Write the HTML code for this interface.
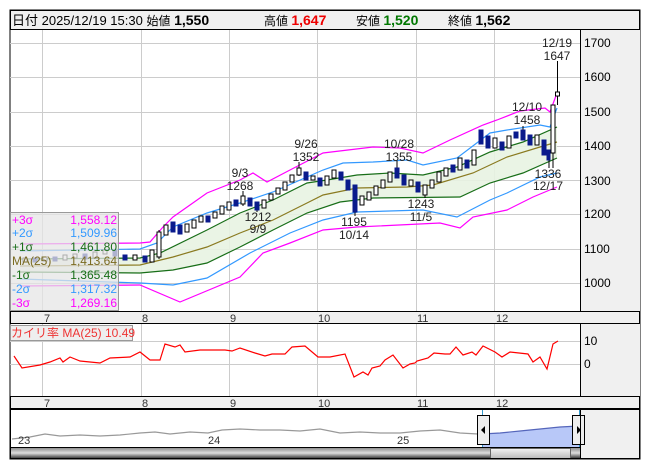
<!DOCTYPE html>
<html><head><meta charset="utf-8"><style>
body{margin:0;background:#fff;width:653px;height:470px;overflow:hidden}
svg{display:block;font-family:"Liberation Sans","Noto Sans CJK JP",sans-serif}
</style></head><body>
<svg width="653" height="470" viewBox="0 0 653 470" xmlns="http://www.w3.org/2000/svg">
<defs>
<linearGradient id="sb" x1="0" y1="0" x2="0" y2="1"><stop offset="0" stop-color="#888"/><stop offset="0.5" stop-color="#ddd"/><stop offset="1" stop-color="#333"/></linearGradient>
<linearGradient id="th" x1="0" y1="0" x2="0" y2="1"><stop offset="0" stop-color="#f4f4f4"/><stop offset="1" stop-color="#bbb"/></linearGradient>
</defs>
<rect x="10" y="10" width="630" height="449" fill="#fff" stroke="#000"/>
<rect x="10.5" y="10.5" width="629" height="19" fill="#f0f0f0" stroke="#000"/>
<text x="12" y="25" font-size="13" fill="#000">日付 2025/12/19 15:30 <tspan font-size="12">始値</tspan> <tspan font-weight="bold" font-size="14">1,550</tspan></text>
<text x="264" y="25" font-size="12">高値 <tspan font-weight="bold" font-size="14" fill="#e00">1,647</tspan></text>
<text x="356" y="25" font-size="12">安値 <tspan font-weight="bold" font-size="14" fill="#070">1,520</tspan></text>
<text x="448" y="25" font-size="12">終値 <tspan font-weight="bold" font-size="14">1,562</tspan></text>
<rect x="580" y="30" width="60" height="281" fill="#f0f0f0"/>
<rect x="580" y="324" width="60" height="72" fill="#f0f0f0"/>
<rect x="580" y="409" width="60" height="50" fill="#f0f0f0"/>
<line x1="580.5" y1="30" x2="580.5" y2="459" stroke="#000"/>
<g stroke="#ccc" stroke-width="1">
<line x1="10" y1="43.5" x2="580" y2="43.5"/><line x1="10" y1="77.5" x2="580" y2="77.5"/><line x1="10" y1="112.5" x2="580" y2="112.5"/><line x1="10" y1="146.5" x2="580" y2="146.5"/><line x1="10" y1="180.5" x2="580" y2="180.5"/><line x1="10" y1="214.5" x2="580" y2="214.5"/><line x1="10" y1="249.5" x2="580" y2="249.5"/><line x1="10" y1="283.5" x2="580" y2="283.5"/>
<line x1="42.5" y1="30" x2="42.5" y2="311"/><line x1="141.5" y1="30" x2="141.5" y2="311"/><line x1="229.5" y1="30" x2="229.5" y2="311"/><line x1="317.5" y1="30" x2="317.5" y2="311"/><line x1="416.5" y1="30" x2="416.5" y2="311"/><line x1="494.5" y1="30" x2="494.5" y2="311"/>
<line x1="42.5" y1="324" x2="42.5" y2="396"/><line x1="141.5" y1="324" x2="141.5" y2="396"/><line x1="229.5" y1="324" x2="229.5" y2="396"/><line x1="317.5" y1="324" x2="317.5" y2="396"/><line x1="416.5" y1="324" x2="416.5" y2="396"/><line x1="494.5" y1="324" x2="494.5" y2="396"/>
<line x1="10" y1="341.5" x2="580" y2="341.5"/><line x1="10" y1="364.5" x2="580" y2="364.5"/>
</g>
<g font-size="12" fill="#000">
<text x="584" y="47">1700</text><text x="584" y="81">1600</text><text x="584" y="116">1500</text><text x="584" y="150">1400</text><text x="584" y="185">1300</text><text x="584" y="218">1200</text><text x="584" y="253">1100</text><text x="584" y="287">1000</text>
<text x="584" y="345">10</text><text x="584" y="368">0</text>
</g>
<polygon fill="#e8f3e2" opacity="0.9" points="20,259 140,258 160,253 207,230 240,213 273,200 307,183 327,180 357,175 390,173 423,175 457,167 490,152 523,142 557,127 557,158 523,173 490,183 460,197 373,198 340,202 307,213 273,230 240,247 207,263 173,270 140,273 20,272"/>
<g fill="none" stroke-width="1.2">
<polyline stroke="#f0f" points="20,244 140,243 150,242 163,227 173,217 207,193 240,180 253,173 267,182 290,170 323,153 373,147 400,148 423,153 450,140 483,125 497,120 520,111 545,108 550,112 557,93"/>
<polyline stroke="#39f" points="20,251 140,249 157,243 173,227 207,213 240,203 273,192 307,177 323,170 343,163 373,162 407,160 423,165 457,158 490,133 507,130 540,125 550,127 557,108"/>
<polyline stroke="#186e18" points="20,259 140,258 160,253 207,230 240,213 273,200 307,183 327,180 357,175 390,173 423,175 457,167 490,152 523,142 557,127"/>
<polyline stroke="#8a7a20" points="20,266 140,265 173,257 207,247 240,233 273,220 307,203 323,195 357,188 407,187 433,185 473,173 507,157 540,147 557,142"/>
<polyline stroke="#186e18" points="20,272 140,273 173,270 207,263 240,247 273,230 307,213 340,202 373,198 460,197 490,183 523,173 557,158"/>
<polyline stroke="#39f" points="20,279 140,283 173,285 207,278 250,253 290,233 323,220 357,212 423,210 457,217 490,200 507,193 540,177 557,173"/>
<polyline stroke="#f0f" points="20,286 140,285 180,302 240,277 263,253 290,243 323,230 357,227 440,223 460,228 473,217 507,210 533,197 557,187"/>
</g>
<g stroke="#000" stroke-width="1">
<path d="M159 259V230M243 206V191M257 202V212M299 176V162M355 185V216M397 168V161M425 195V198M523 130V126M549 160V168M553 153V168M557.5 105V61"/>
</g>
<g stroke="#000" fill="#fff">
<rect x="23" y="258" width="4" height="4"/><rect x="43" y="257" width="4" height="4"/><rect x="63" y="255" width="4" height="5"/><rect x="73" y="254" width="4" height="4"/><rect x="93" y="252" width="4" height="6"/><rect x="103" y="250" width="4" height="4"/><rect x="133" y="255" width="4" height="5"/><rect x="150" y="250" width="4" height="12"/><rect x="157" y="232" width="4" height="25"/><rect x="164" y="225" width="4" height="10"/><rect x="185" y="224" width="4" height="8"/><rect x="192" y="220" width="4" height="8"/><rect x="199" y="216" width="4" height="6"/><rect x="213" y="212" width="4" height="6"/><rect x="220" y="206" width="4" height="8"/><rect x="227" y="202" width="4" height="8"/><rect x="241" y="196" width="4" height="8"/><rect x="262" y="200" width="4" height="8"/><rect x="269" y="194" width="4" height="6"/><rect x="276" y="188" width="4" height="6"/><rect x="283" y="182" width="4" height="8"/><rect x="290" y="175" width="4" height="7"/><rect x="297" y="168" width="4" height="7"/><rect x="311" y="176" width="4" height="4"/><rect x="325" y="176" width="4" height="9"/><rect x="332" y="170" width="4" height="8"/><rect x="360" y="196" width="4" height="9"/><rect x="367" y="192" width="4" height="8"/><rect x="374" y="186" width="4" height="9"/><rect x="381" y="180" width="4" height="8"/><rect x="388" y="172" width="4" height="10"/><rect x="409" y="180" width="4" height="6"/><rect x="423" y="185" width="4" height="10"/><rect x="430" y="180" width="4" height="8"/><rect x="437" y="172" width="4" height="10"/><rect x="444" y="168" width="4" height="8"/><rect x="458" y="158" width="4" height="12"/><rect x="472" y="150" width="4" height="15"/><rect x="493" y="138" width="4" height="10"/><rect x="507" y="136" width="4" height="12"/><rect x="535" y="135" width="4" height="10"/><rect x="551" y="105" width="4" height="48"/><rect x="555.5" y="92" width="4" height="4"/>
</g>
<g fill="#0a1a8c" stroke="#0a1a8c">
<rect x="33" y="258" width="4" height="4"/><rect x="53" y="257" width="4" height="4"/><rect x="83" y="254" width="4" height="5"/><rect x="113" y="250" width="4" height="6"/><rect x="123" y="255" width="4" height="5"/><rect x="143" y="256" width="4" height="6"/><rect x="171" y="222" width="4" height="10"/><rect x="178" y="225" width="4" height="9"/><rect x="206" y="216" width="4" height="6"/><rect x="234" y="200" width="4" height="6"/><rect x="248" y="198" width="4" height="8"/><rect x="255" y="202" width="4" height="8"/><rect x="304" y="172" width="4" height="8"/><rect x="318" y="178" width="4" height="8"/><rect x="339" y="172" width="4" height="8"/><rect x="346" y="180" width="4" height="10"/><rect x="353" y="185" width="4" height="27"/><rect x="395" y="168" width="4" height="10"/><rect x="402" y="175" width="4" height="10"/><rect x="416" y="182" width="4" height="10"/><rect x="451" y="165" width="4" height="7"/><rect x="465" y="160" width="4" height="8"/><rect x="479" y="130" width="4" height="14"/><rect x="486" y="136" width="4" height="12"/><rect x="500" y="142" width="4" height="8"/><rect x="514" y="132" width="4" height="6"/><rect x="521" y="130" width="4" height="10"/><rect x="528" y="135" width="4" height="10"/><rect x="542" y="140" width="4" height="15"/><rect x="547" y="150" width="3" height="10"/>
</g>
<g font-size="12" fill="#222" text-anchor="middle">
<text x="557" y="47">12/19</text><text x="557" y="60">1647</text>
<text x="527" y="111">12/10</text><text x="527" y="124">1458</text>
<text x="306" y="148">9/26</text><text x="306" y="161">1352</text>
<text x="399" y="148">10/28</text><text x="399" y="161">1355</text>
<text x="240" y="177">9/3</text><text x="240" y="190">1268</text>
<text x="258" y="221">1212</text><text x="258" y="233">9/9</text>
<text x="354" y="226">1195</text><text x="354" y="239">10/14</text>
<text x="421" y="208">1243</text><text x="421" y="221">11/5</text>
<text x="548" y="178">1336</text><text x="548" y="190">12/17</text>
</g>
<rect x="10.5" y="212.5" width="108" height="98" fill="#e6e6e6" fill-opacity="0.75" stroke="#999"/>
<g font-size="12">
<text x="12" y="224" fill="#f0f">+3σ</text><text x="117" y="224" fill="#f0f" text-anchor="end">1,558.12</text>
<text x="12" y="237" fill="#39f">+2σ</text><text x="117" y="237" fill="#39f" text-anchor="end">1,509.96</text>
<text x="12" y="251" fill="#186e18">+1σ</text><text x="117" y="251" fill="#186e18" text-anchor="end">1,461.80</text>
<text x="12" y="265" fill="#7a6a20">MA(25)</text><text x="117" y="265" fill="#7a6a20" text-anchor="end">1,413.64</text>
<text x="12" y="279" fill="#186e18">-1σ</text><text x="117" y="279" fill="#186e18" text-anchor="end">1,365.48</text>
<text x="12" y="293" fill="#39f">-2σ</text><text x="117" y="293" fill="#39f" text-anchor="end">1,317.32</text>
<text x="12" y="307" fill="#f0f">-3σ</text><text x="117" y="307" fill="#f0f" text-anchor="end">1,269.16</text>
</g>
<rect x="10.5" y="311.5" width="629" height="12" fill="#f0f0f0" stroke="#000"/>
<rect x="10.5" y="396.5" width="629" height="12" fill="#f0f0f0" stroke="#000"/>
<g font-size="11" fill="#333">
<text x="44" y="322">7</text><text x="142" y="322">8</text><text x="230" y="322">9</text><text x="318" y="322">10</text><text x="417" y="322">11</text><text x="496" y="322">12</text>
<text x="44" y="407">7</text><text x="142" y="407">8</text><text x="230" y="407">9</text><text x="318" y="407">10</text><text x="417" y="407">11</text><text x="496" y="407">12</text>
</g>
<rect x="10.5" y="325.5" width="122" height="15" fill="#eee" stroke="#999"/>
<text x="11" y="337" font-size="12" fill="#e33">カイリ率 MA(25)  10.49</text>
<polyline fill="none" stroke="#f00" stroke-width="1.2" points="14,356 22,368 40,365 50,362 60,358 63,362 70,357 80,361 100,363 110,358 130,357 140,352 150,360 160,360 165,344 175,347 180,345 185,352 200,350 215,350 225,350 232,351 240,348 255,353 265,356 272,354 285,354 292,347 305,346 318,357 330,357 345,354 354,377 363,372 368,375 372,368 380,366 385,360 393,355 403,368 410,364 415,363 417,361 428,358 434,353 445,354 450,354 456,347 463,355 472,352 476,355 483,346 495,352 502,357 510,352 528,354 533,362 540,357 547,369 553,344 558,341"/>
<polygon fill="#b8c8f8" points="482,434 500,433 520,431 540,429 560,427 579,426 579,447 482,447"/>
<polyline fill="none" stroke="#999" stroke-width="1.2" points="12,439 30,437 45,434 60,436 80,435 100,436 120,435 140,433 155,432 170,434 190,432 208,433 222,430 240,429 260,430 280,430 300,431 320,429 340,433 360,432 380,433 400,433 420,431 440,430 460,433 478,434"/>
<polyline fill="none" stroke="#5566bb" stroke-width="1.2" points="482,434 500,433 520,431 540,429 560,427 579,426"/>
<line x1="482.5" y1="409" x2="482.5" y2="447" stroke="#39c"/><line x1="579.5" y1="409" x2="579.5" y2="447" stroke="#39c"/>
<g font-size="11" fill="#333"><text x="18" y="444">23</text><text x="208" y="444">24</text><text x="397" y="444">25</text></g>
<rect x="477.5" y="415.5" width="12" height="29" fill="#eee" stroke="#000"/><path d="M481 430l4-4v8z" fill="#000"/>
<rect x="572.5" y="415.5" width="12" height="29" fill="#eee" stroke="#000"/><path d="M581 430l-4-4v8z" fill="#000"/>
<rect x="10.5" y="447.5" width="570" height="11" fill="url(#sb)" stroke="#000"/>
<rect x="490.5" y="448.5" width="80" height="10" fill="url(#th)" stroke="#666"/>
<line x1="580.5" y1="409" x2="580.5" y2="459" stroke="#000"/>
<rect x="10.5" y="409.5" width="629" height="49" fill="none" stroke="#000"/>
<line x1="10" y1="29.5" x2="640" y2="29.5" stroke="#000"/>
</svg>
</body></html>
